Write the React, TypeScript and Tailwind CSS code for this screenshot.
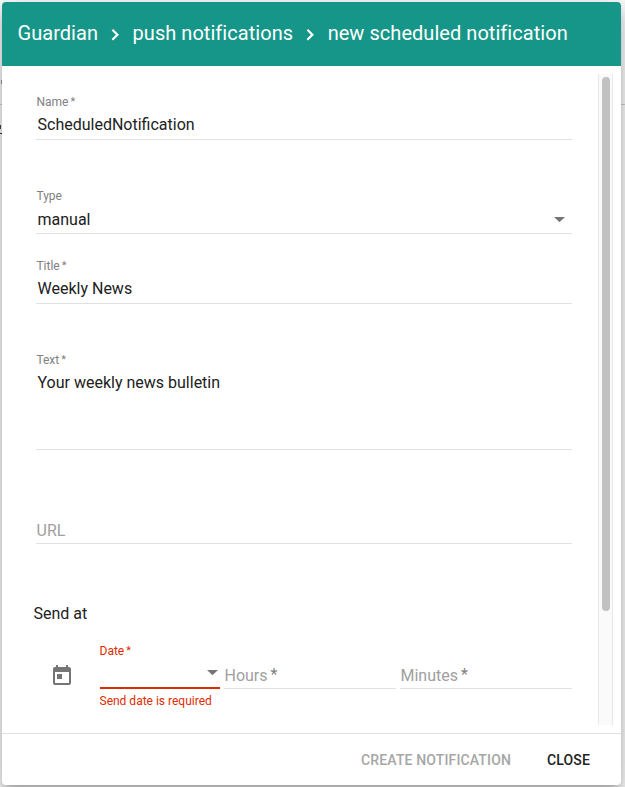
import React from 'react';

function Chevron() {
  return (
    <svg className="mt-[3px] h-6 w-[34.5px] shrink-0" viewBox="0 0 34.5 24" fill="none" stroke="white" strokeWidth="2.2">
      <path d="M14.4 6.8 L19.4 11.8 L14.4 16.8" />
    </svg>
  );
}

function Arrow({ className = '' }: { className?: string }) {
  return (
    <svg className={`h-[5px] w-[11px] shrink-0 ${className}`} viewBox="0 0 11 5">
      <path d="M0 0 H11 L5.5 5.2 Z" fill="#757575" />
    </svg>
  );
}

function Star({ className = '' }: { className?: string }) {
  return <span className={`relative -top-px ml-[2px] ${className}`}>*</span>;
}

type FieldProps = {
  label: string;
  value: string;
  required?: boolean;
  select?: boolean;
  height: string;
  valueHeight?: string;
  valuePad?: string;
};

function Field({ label, value, required, select, height, valueHeight = 'h-[28px]', valuePad = 'pt-[2px]' }: FieldProps) {
  return (
    <div className={`flex shrink-0 flex-col justify-end border-b border-[#e0e0e0] ${height}`}>
      <label className="pl-[0.4px] text-[12px] leading-4 text-[#808080]">
        {label}
        {required && <Star className="text-[11px]" />}
      </label>
      <div className={`flex justify-between pl-[1.5px] text-[16px] leading-6 text-[#212121] ${valuePad} ${valueHeight}`}>
        <span>{value}</span>
        {select && <Arrow className="mr-[7px] mt-[9px]" />}
      </div>
    </div>
  );
}

function TimeField({ label }: { label: string }) {
  return (
    <div className="h-[26px] w-[172px] border-b border-[#e0e0e0] pl-[0.5px] pt-px text-[16px] leading-6 text-[#a0a0a0]">
      {label}
      <Star className="ml-[3px] text-[#808080]" />
    </div>
  );
}

export default function App() {
  return (
    <div className="relative h-[787px] w-[625px] overflow-hidden bg-[#fafafa] p-[2px] font-['Roboto',sans-serif]">
      <div className="absolute left-0 top-[104px] h-px w-full bg-[#cfcfcf]" />
      <div className="absolute left-0 top-[133px] h-px w-[2px] bg-[#333333]" />
      <div className="absolute left-0 top-[125px] h-[4px] w-px bg-[#444444]" />
      <div className="absolute left-px top-[80px] h-[4px] w-px bg-[#999999]" />
      <div className="relative flex h-[783px] w-[619px] flex-col overflow-hidden rounded-[4px] bg-white shadow-[0_7px_8px_-4px_rgba(0,0,0,0.2),0_13px_19px_2px_rgba(0,0,0,0.14),0_5px_24px_4px_rgba(0,0,0,0.12)]">
        <header className="flex h-16 shrink-0 items-center bg-[#159688] pb-[2px] pl-[15.5px] text-[20px] leading-6 tracking-[0.045px] text-white">
          <span>Guardian</span>
          <Chevron />
          <span>push notifications</span>
          <Chevron />
          <span>new scheduled notification</span>
        </header>

        <main className="flex h-[668px] shrink-0 justify-between border-b border-[#e0e0e0]">
          <form className="ml-[34px] flex w-[536px] flex-col">
            <Field label="Name" value="ScheduledNotification" required height="h-[74px]" />
            <Field label="Type" value="manual" select height="h-[94px]" valueHeight="h-[29px]" valuePad="pt-[4px]" />
            <Field label="Title" value="Weekly News" required height="h-[70px]" />
            <Field label="Text" value="Your weekly news bulletin" required height="h-[146px]" valueHeight="h-[80px]" />
            <div className="flex h-[94px] shrink-0 items-end border-b border-[#e0e0e0] pl-[0.5px] text-[16px] leading-[25px] text-[#a0a0a0]">
              URL
            </div>
            <div className="-ml-[2.5px] mt-[58px] text-[16px] leading-6 text-[#212121]">Send at</div>
            <div className="mt-[17px] flex items-start">
              <svg className="ml-[14px] mt-[21px] h-6 w-6 shrink-0" viewBox="0 0 24 24" fill="#757575">
                <path d="M19 3h-1V1h-2v2H8V1H6v2H5c-1.11 0-1.99.9-1.99 2L3 19c0 1.1.89 2 2 2h14c1.1 0 2-.9 2-2V5c0-1.1-.9-2-2-2zm0 16H5V8h14v11zM7 10h5v5H7z" />
              </svg>
              <div className="ml-[26px] w-[120px] text-[12px] leading-4 text-[#dd2c00]">
                <div className="-ml-[0.5px] h-4">
                  Date
                  <Star className="text-[11px]" />
                </div>
                <div className="flex h-[30px] justify-end border-b-2 border-[#dd2c00]">
                  <Arrow className="mr-[2px] mt-[11px]" />
                </div>
                <div className="-ml-[0.5px] mt-[4px]">Send date is required</div>
              </div>
              <div className="ml-1 mt-[20px] flex gap-1">
                <TimeField label="Hours" />
                <TimeField label="Minutes" />
              </div>
            </div>
          </form>
          <div className="mr-2 mt-2 h-[651px] w-[15px] border-x border-[#e8e8e8] bg-[#fafafa] px-[3px] pt-[3px]">
            <div className="h-[534px] w-[8px] rounded-full bg-[#c1c1c1]" />
          </div>
        </main>

        <footer className="flex h-[51px] items-center justify-end gap-9 pr-[31px] pt-[2px] text-[14px] font-medium tracking-[0.01em]">
          <button className="text-[#a6a6a6]">CREATE NOTIFICATION</button>
          <button className="text-[#212121]">CLOSE</button>
        </footer>
      </div>
    </div>
  );
}
